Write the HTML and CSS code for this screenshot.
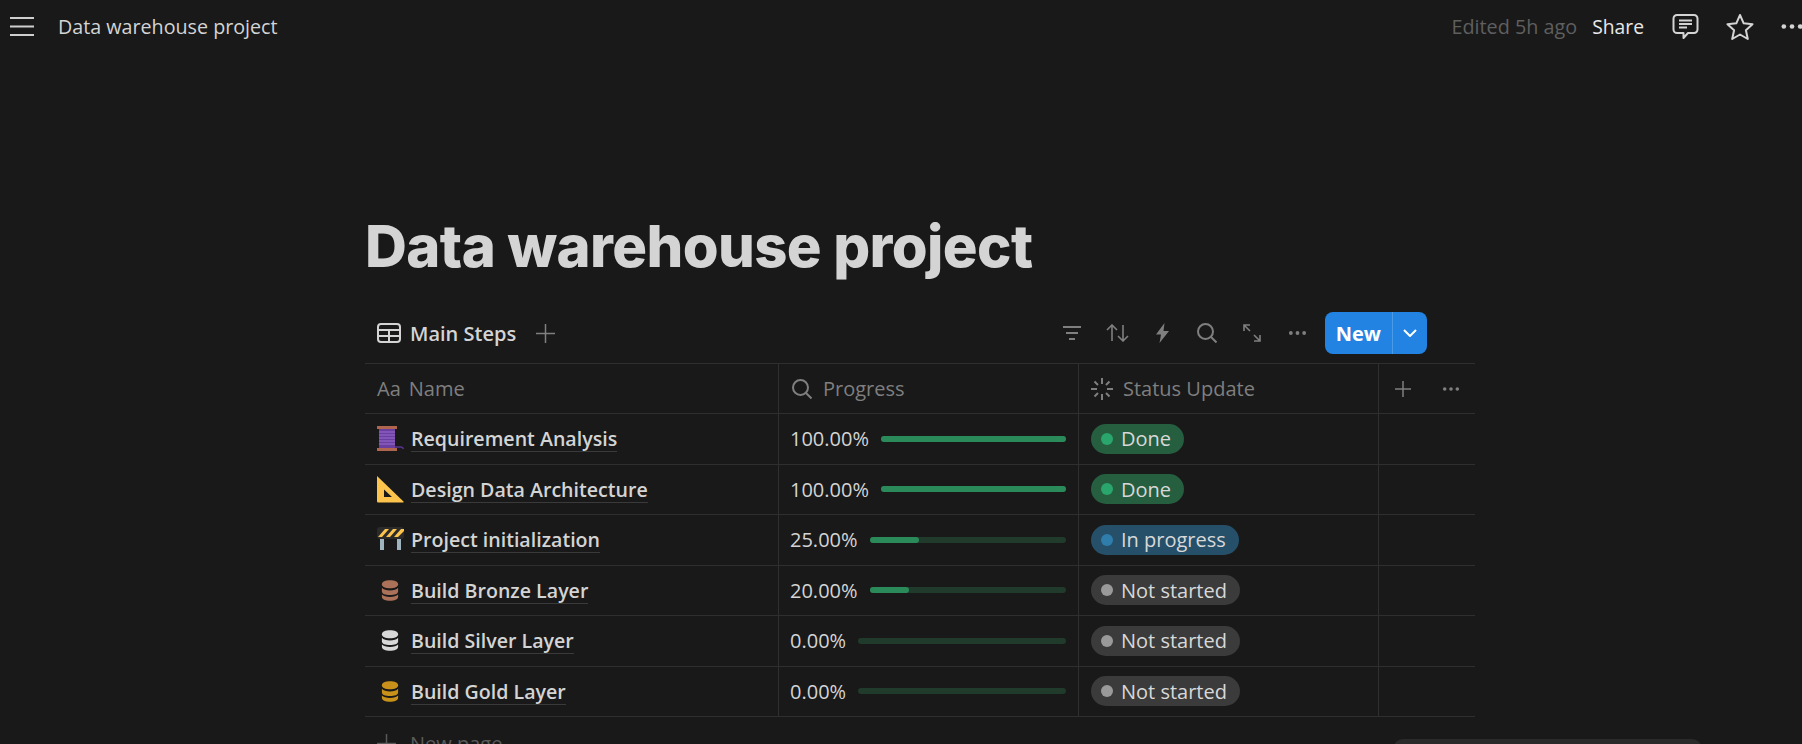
FILE: index.html
```html
<!DOCTYPE html>
<html lang="en">

<head>
    <meta charset="UTF-8">
    <meta name="viewport" content="width=device-width, initial-scale=1.0">
    <title>Data warehouse project</title>
    <link rel="stylesheet" href="styles.css">
</head>

<body>

    <!-- Shared icons -->
    <svg class="sprite" width="0" height="0">
        <symbol id="db" viewBox="0 0 20 24">
            <path d="M1 5c0-3 4-4.500 9-4.500s9 1.500 9 4.500-4 4.500-9 4.500S1 8 1 5z" />
            <path d="M1 9c1.500 2 5 3 9 3s7.500-1 9-3v4c0 2.500-4 4-9 4s-9-1.500-9-4z" />
            <path d="M1 16.500c1.500 1.800 5 2.700 9 2.700s7.500-.9 9-2.700V19c0 2.800-4 4.500-9 4.500S1 21.800 1 19z" />
        </symbol>
        <symbol id="dots" viewBox="0 0 20 6">
            <circle cx="3" cy="3" r="2" />
            <circle cx="10" cy="3" r="2" />
            <circle cx="17" cy="3" r="2" />
        </symbol>
    </svg>

    <!-- Top bar -->
    <header class="topbar">
        <svg class="hamburger" width="24" height="20" viewBox="0 0 24 20">
            <path d="M0 2h24M0 10.500h24M0 19h24" />
        </svg>
        <span class="crumb">Data warehouse project</span>
        <span class="edited">Edited 5h ago</span>
        <span class="share">Share</span>
        <svg class="top-icon comment" width="27" height="27" viewBox="0 0 27 27">
            <path d="M5 2h17a3.500 3.500 0 0 1 3.500 3.500v11A3.500 3.500 0 0 1 22 20h-6l-4.500 5v-5H5a3.500 3.500 0 0 1-3.500-3.500v-11A3.500 3.500 0 0 1 5 2z" />
            <path d="M7 7.500h13M7 11h13M7 14.500h8" />
        </svg>
        <svg class="top-icon star" width="28" height="27" viewBox="0 0 28 27">
            <path d="M14 2l3.700 8.300 8.800.9-6.600 6 1.900 8.800L14 21.500 6.200 26l1.900-8.800-6.600-6 8.800-.9z" />
        </svg>
        <svg class="top-dots" width="24" height="7" viewBox="0 0 20 6"><use href="#dots" /></svg>
    </header>

    <main class="page">
        <h1 class="title">Data warehouse project</h1>

        <!-- View tabs and toolbar -->
        <div class="toolbar">
            <svg class="tab-icon" width="24" height="20" viewBox="0 0 24 20">
                <rect x="1" y="1" width="22" height="18" rx="3" />
                <path d="M1 7h22M1 13h22M12 7v12" />
            </svg>
            <span class="tab-name">Main Steps</span>
            <svg class="tab-plus" width="19" height="19" viewBox="0 0 19 19"><path d="M9.500 0v19M0 9.500h19" /></svg>

            <div class="actions">
                <span class="slot"><svg class="tool" width="18" height="14" viewBox="0 0 18 14"><path d="M0 1h18M3 7h12M6 13h6" /></svg></span>
                <span class="slot"><svg class="tool thin" width="23" height="18" viewBox="0 0 23 18"><path d="M6 17V1M1 6l5-5 5 5M17 1v16M12 12l5 5 5-5" /></svg></span>
                <span class="slot"><svg class="tool-fill" width="13" height="20" viewBox="0 0 13 20"><path d="M8.500 0L0 11.500h5L3.500 20 13 8H7.500z" /></svg></span>
                <span class="slot"><svg class="tool" width="20" height="20" viewBox="0 0 20 20"><circle cx="8.500" cy="8.500" r="7.500" /><path d="M14 14l5.500 5.500" /></svg></span>
                <span class="slot"><svg class="tool thin" width="18" height="18" viewBox="0 0 18 18"><path d="M1 7V1h6M1 1l6 6M11 11l6 6M17 11v6h-6" /></svg></span>
                <span class="slot"><svg class="tool-fill" width="19" height="6" viewBox="0 0 20 6"><use href="#dots" /></svg></span>
                <div class="new-btn">
                    <span class="new-label">New</span>
                    <span class="new-arrow">
                        <svg width="14" height="8" viewBox="0 0 14 8"><path d="M1 1l6 6 6-6" /></svg>
                    </span>
                </div>
            </div>
        </div>

        <!-- Database table -->
        <div class="table">
            <div class="row head">
                <div class="cell name"><span class="aa">Aa</span>Name</div>
                <div class="cell">
                    <svg class="head-icon search" width="20" height="20" viewBox="0 0 20 20"><circle cx="8.500" cy="8.500" r="7.500" /><path d="M14 14l5.500 5.500" /></svg>
                    Progress
                </div>
                <div class="cell">
                    <svg class="head-icon" width="24" height="24" viewBox="0 0 24 24">
                        <path d="M12 1v6M12 17v6M1 12h6M17 12h6M4.500 4.500l3.500 3.500M16 16l3.500 3.500M19.500 4.500L16 8M8 16l-3.500 3.500" />
                    </svg>
                    Status Update
                </div>
                <div class="cell last">
                    <svg class="head-plus" width="16" height="16" viewBox="0 0 16 16"><path d="M8 0v16M0 8h16" /></svg>
                    <svg class="head-dots" width="18" height="6" viewBox="0 0 20 6"><use href="#dots" /></svg>
                </div>
            </div>

            <div class="row">
                <div class="cell name">
                    <svg class="emoji" width="27" height="27" viewBox="0 0 27 27">
                        <rect x="2" y="4" width="16" height="19" fill="#6b3fa0" />
                        <path d="M2 7h16M2 10h16M2 13h16M2 16h16M2 19h16" stroke="#9a6fd0" stroke-width="1" />
                        <rect x="0" y="1" width="20" height="3" fill="#b0654f" />
                        <rect x="0" y="23" width="20" height="3" fill="#b0654f" />
                        <path d="M18 22h6c1.500 0 2 1 2.500 2" stroke="#5a3590" stroke-width="1.300" fill="none" />
                    </svg>
                    <span class="page-link">Requirement Analysis</span>
                </div>
                <div class="cell progress"><span>100.00%</span><div class="track"><div class="fill" style="width: 100%"></div></div></div>
                <div class="cell"><span class="pill done"><i></i>Done</span></div>
                <div class="cell last"></div>
            </div>

            <div class="row">
                <div class="cell name">
                    <svg class="emoji" width="27" height="27" viewBox="0 0 27 27">
                        <path fill-rule="evenodd" fill="#fcc44d" d="M0 0l26.500 25.500c.3.500 0 1-.5 1H1.500C.6 26.500 0 26 0 25zM7 13.500V21h8z" />
                    </svg>
                    <span class="page-link">Design Data Architecture</span>
                </div>
                <div class="cell progress"><span>100.00%</span><div class="track"><div class="fill" style="width: 100%"></div></div></div>
                <div class="cell"><span class="pill done"><i></i>Done</span></div>
                <div class="cell last"></div>
            </div>

            <div class="row">
                <div class="cell name">
                    <svg class="emoji" width="27" height="27" viewBox="0 0 27 27">
                        <rect x="3" y="12" width="4" height="12" fill="#9fb4bf" />
                        <rect x="20" y="12" width="4" height="12" fill="#9fb4bf" />
                        <rect x="0" y="1" width="27" height="12" rx="3" fill="#2b2b2b" />
                        <path d="M1 11l7-8h4l-7 8zM9 11l7-8h4l-7 8zM17 11l7-8h3v2l-6 6z" fill="#fcc44d" />
                    </svg>
                    <span class="page-link">Project initialization</span>
                </div>
                <div class="cell progress"><span>25.00%</span><div class="track"><div class="fill" style="width: 25%"></div></div></div>
                <div class="cell"><span class="pill active"><i></i>In progress</span></div>
                <div class="cell last"></div>
            </div>

            <div class="row">
                <div class="cell name">
                    <svg class="emoji db" width="18" height="23" viewBox="0 0 20 24" fill="#ac7259"><use href="#db" /></svg>
                    <span class="page-link">Build Bronze Layer</span>
                </div>
                <div class="cell progress"><span>20.00%</span><div class="track"><div class="fill" style="width: 20%"></div></div></div>
                <div class="cell"><span class="pill idle"><i></i>Not started</span></div>
                <div class="cell last"></div>
            </div>

            <div class="row">
                <div class="cell name">
                    <svg class="emoji db" width="18" height="23" viewBox="0 0 20 24" fill="#d8d8d8"><use href="#db" /></svg>
                    <span class="page-link">Build Silver Layer</span>
                </div>
                <div class="cell progress"><span>0.00%</span><div class="track"></div></div>
                <div class="cell"><span class="pill idle"><i></i>Not started</span></div>
                <div class="cell last"></div>
            </div>

            <div class="row">
                <div class="cell name">
                    <svg class="emoji db" width="18" height="23" viewBox="0 0 20 24" fill="#c9901a"><use href="#db" /></svg>
                    <span class="page-link">Build Gold Layer</span>
                </div>
                <div class="cell progress"><span>0.00%</span><div class="track"></div></div>
                <div class="cell"><span class="pill idle"><i></i>Not started</span></div>
                <div class="cell last"></div>
            </div>

            <div class="new-page">
                <svg width="19" height="19" viewBox="0 0 19 19"><path d="M9.500 0v19M0 9.500h19" /></svg>
                New page
            </div>
        </div>
    </main>

    <!-- Floating panel cut off by the window -->
    <div class="floating"></div>

</body>

</html>
```

FILE: styles.css
```css
html,
body {
    height: 100%;
}

body {
    margin: 0;
    overflow: hidden;
    background: #191919;
    color: #d4d4d4;
    font-family: "Open Sans", "Noto Sans", Arial, sans-serif;
    font-size: 20px;
}

.sprite {
    position: absolute;
}

/* Top bar */
.topbar {
    display: flex;
    align-items: center;
    height: 52px;
    padding-left: 10px;
}

.hamburger path {
    stroke: #cfcfcf;
    stroke-width: 2;
    fill: none;
}

.crumb {
    margin-left: 24px;
    font-size: 19.700px;
    color: #d4d4d4;
}

.edited {
    margin-left: auto;
    font-size: 19.800px;
    color: #5f5f5f;
}

.share {
    margin-left: 15px;
    font-size: 19.300px;
    color: #e8e8e8;
}

.top-icon path {
    stroke: #d4d4d4;
    stroke-width: 2;
    fill: none;
    stroke-linejoin: round;
}

.comment {
    margin-left: 28px;
}

.star {
    margin-left: 27px;
}

.top-dots {
    margin-left: 26px;
    margin-right: -2px;
    fill: #d4d4d4;
}

/* Page */
.page {
    width: 1110px;
    margin-left: 365px;
}

.title {
    margin: 152px 0 0;
    font-family: Inter, sans-serif;
    font-size: 58px;
    font-weight: 800;
    line-height: 84px;
    color: #d4d4d4;
    letter-spacing: -0.6px;
}

/* Toolbar */
.toolbar {
    display: flex;
    align-items: center;
    height: 60px;
    margin-top: 15px;
    padding-left: 12px;
}

.tab-icon {
    fill: none;
    stroke: #d4d4d4;
    stroke-width: 2;
}

.tab-name {
    margin-left: 9px;
    font-weight: 600;
}

.tab-plus {
    margin-left: 20px;
    fill: none;
    stroke: #7f7f7f;
    stroke-width: 1.500;
}

.actions {
    display: flex;
    align-items: center;
    margin-left: auto;
    margin-right: 48px;
}

.slot {
    display: flex;
    justify-content: center;
    align-items: center;
    width: 45px;
}

.tool {
    fill: none;
    stroke: #7f7f7f;
    stroke-width: 2;
}

.tool.thin {
    stroke-width: 1.600;
}

.tool-fill {
    fill: #7f7f7f;
}

.new-btn {
    display: flex;
    height: 42px;
    margin-left: 5px;
    border-radius: 8px;
    background: #2383e2;
    color: #fff;
    font-weight: 700;
}

.new-label {
    display: flex;
    align-items: center;
    padding: 0 11px;
    border-right: 1px solid #4a9be8;
}

.new-arrow {
    display: flex;
    align-items: center;
    padding: 0 10px;
}

.new-arrow path {
    fill: none;
    stroke: #fff;
    stroke-width: 2;
}

/* Table */
.table {
    border-top: 1px solid #2f2f2f;
}

.row {
    display: grid;
    grid-template-columns: 414px 300px 300px 96px;
    height: 50.500px;
    box-sizing: border-box;
    border-bottom: 1px solid #2f2f2f;
}

.head {
    height: 50px;
    color: #7f7f7f;
}

.cell {
    display: flex;
    align-items: center;
    min-width: 0;
    padding-left: 11px;
    border-right: 1px solid #2f2f2f;
}

.cell.last {
    border-right: none;
}

.cell.name {
    padding-left: 12px;
}

.aa {
    margin-right: 8px;
}

.head-icon {
    margin-right: 9px;
    fill: none;
    stroke: #7f7f7f;
    stroke-width: 2;
}

.head-icon.search {
    margin-left: 2px;
    margin-right: 11px;
}

.head-plus {
    margin-left: 5px;
    fill: none;
    stroke: #7f7f7f;
    stroke-width: 1.500;
}

.head-dots {
    margin-left: 31px;
    fill: #7f7f7f;
}

.emoji {
    flex: none;
    margin-right: 7px;
}

.emoji.db {
    margin-left: 4px;
    margin-right: 12px;
}

.page-link {
    margin-top: 2px;
    font-weight: 600;
    font-size: 19.600px;
    line-height: 24px;
    border-bottom: 1px solid #3a3a3a;
}

/* Progress */
.progress {
    gap: 12px;
    padding-right: 12px;
}

.track {
    flex: 1;
    height: 6px;
    border-radius: 3px;
    background: #203a2b;
}

.fill {
    height: 100%;
    border-radius: 3px;
    background: #2b8a5a;
}

/* Status pills */
.pill {
    display: inline-flex;
    align-items: center;
    height: 30px;
    margin-left: 1px;
    padding: 0 13px 0 10px;
    border-radius: 15px;
    color: #d8d8d8;
}

.pill i {
    width: 12px;
    height: 12px;
    margin-right: 8px;
    border-radius: 50%;
}

.done {
    background: #255f40;
}

.done i {
    background: #2aa56b;
}

.active {
    background: #26506a;
}

.active i {
    background: #2f7dab;
}

.idle {
    background: #3b3b3b;
}

.idle i {
    background: #9a9a9a;
}

/* New page row */
.new-page {
    display: flex;
    align-items: center;
    gap: 14px;
    height: 52px;
    padding-left: 12px;
    color: #5a5a5a;
}

.new-page svg {
    fill: none;
    stroke: #5a5a5a;
    stroke-width: 1.500;
}

/* Floating panel */
.floating {
    position: absolute;
    top: 739px;
    left: 1393px;
    width: 309px;
    height: 40px;
    border-radius: 10px;
    background: #2a2a2a;
}
```
